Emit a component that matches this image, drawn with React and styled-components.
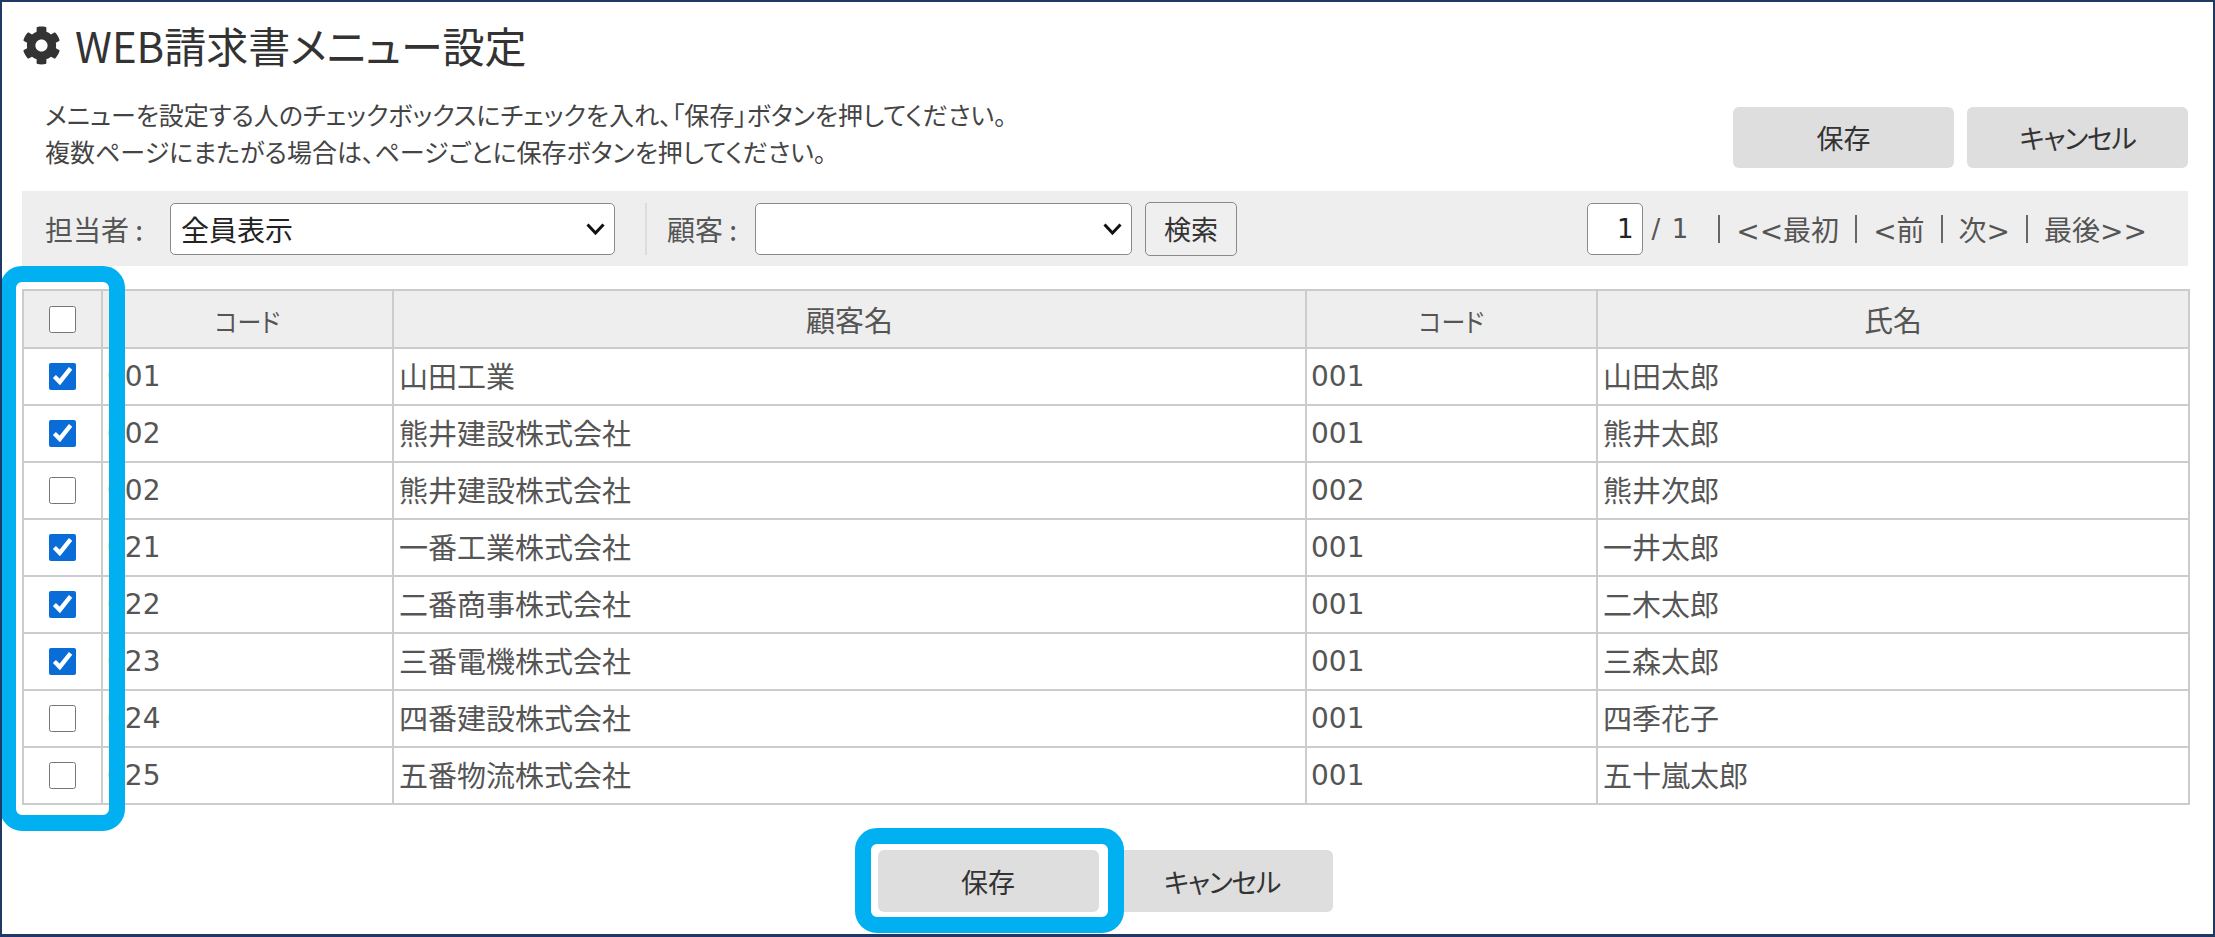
import { createGlobalStyle } from "styled-components";
import styled from "styled-components";
import { FaCog } from "react-icons/fa";

const JP = `"Noto Sans CJK JP", "Noto Sans", sans-serif`;
const NUM = `"DejaVu Sans", "Noto Sans CJK JP", sans-serif`;

const rows = [
  { on: true, id: "001", name: "山田工業", code: "001", person: "山田太郎" },
  { on: true, id: "002", name: "熊井建設株式会社", code: "001", person: "熊井太郎" },
  { on: false, id: "002", name: "熊井建設株式会社", code: "002", person: "熊井次郎" },
  { on: true, id: "021", name: "一番工業株式会社", code: "001", person: "一井太郎" },
  { on: true, id: "022", name: "二番商事株式会社", code: "001", person: "二木太郎" },
  { on: true, id: "023", name: "三番電機株式会社", code: "001", person: "三森太郎" },
  { on: false, id: "024", name: "四番建設株式会社", code: "001", person: "四季花子" },
  { on: false, id: "025", name: "五番物流株式会社", code: "001", person: "五十嵐太郎" },
];

const Chevron = () => (
  <ChevronIcon viewBox="0 0 19 12" width="19" height="12">
    <path d="M1.5 1.5 L9.5 10 L17.5 1.5" fill="none" stroke="#111" strokeWidth="3" />
  </ChevronIcon>
);

const App = () => {
  return (
    <Frame>
      <TitleRow>
        <FaCog size={39} color="#333" />
        <Title>WEB請求書メニュー設定</Title>
      </TitleRow>

      <IntroRow>
        <Intro>
          <p>メニューを設定する人のチェックボックスにチェックを入れ、「保存」ボタンを押してください。</p>
          <p>複数ページにまたがる場合は、ページごとに保存ボタンを押してください。</p>
        </Intro>
        <Actions>
          <ActionButton>保存</ActionButton>
          <ActionButton $tight>キャンセル</ActionButton>
        </Actions>
      </IntroRow>

      <Toolbar>
        <Label $width={125}>担当者 :</Label>
        <SelectWrap $width={445}>
          <Select defaultValue="all">
            <option value="all">全員表示</option>
          </Select>
          <Chevron />
        </SelectWrap>
        <Divider />
        <Label $width={88}>顧客 :</Label>
        <SelectWrap $width={377}>
          <Select defaultValue="">
            <option value=""></option>
          </Select>
          <Chevron />
        </SelectWrap>
        <SearchButton>検索</SearchButton>
        <Pager>
          <PageInput defaultValue="1" />
          <PageTotal>/ 1</PageTotal>
          <PageSep />
          <PageLink>&lt;&lt;最初</PageLink>
          <PageSep />
          <PageLink>&lt;前</PageLink>
          <PageSep />
          <PageLink>次&gt;</PageLink>
          <PageSep />
          <PageLink>最後&gt;&gt;</PageLink>
        </Pager>
      </Toolbar>

      <TableWrap>
        <Table>
          <colgroup>
            <col width="79" />
            <col width="291" />
            <col width="913" />
            <col width="291" />
            <col width="592" />
          </colgroup>
          <thead>
            <tr>
              <Head>
                <Check type="checkbox" />
              </Head>
              <Head>
                <Narrow>コード</Narrow>
              </Head>
              <Head>顧客名</Head>
              <Head>
                <Narrow>コード</Narrow>
              </Head>
              <Head>氏名</Head>
            </tr>
          </thead>
          <tbody>
            {rows.map((row, i) => (
              <tr key={i}>
                <CheckCell>
                  <Check type="checkbox" defaultChecked={row.on} />
                </CheckCell>
                <CodeCell>{row.id}</CodeCell>
                <Cell>{row.name}</Cell>
                <CodeCell>{row.code}</CodeCell>
                <Cell>{row.person}</Cell>
              </tr>
            ))}
          </tbody>
        </Table>
        <ColumnHighlight />
      </TableWrap>

      <Footer>
        <SaveWrap>
          <FooterButton>保存</FooterButton>
          <SaveHighlight />
        </SaveWrap>
        <FooterButton $tight>キャンセル</FooterButton>
      </Footer>
      <GlobalStyle />
    </Frame>
  );
};
export default App;

const GlobalStyle = createGlobalStyle`
  html, body {
    margin: 0;
    padding: 0;
    background: #fff;
  }
  * {
    box-sizing: border-box;
  }
`;

const Frame = styled.div`
  width: 2215px;
  height: 937px;
  overflow: hidden;
  border: 2px solid #1f3864;
  border-bottom-width: 3px;
  padding: 0 25px 0 20px;
  background: #fff;
  color: #444;
  font-family: ${JP};
  font-feature-settings: "palt";
`;

const TitleRow = styled.div`
  display: flex;
  align-items: center;
  gap: 14px;
  height: 64px;
  margin-top: 11px;
`;

const Title = styled.h1`
  margin: 0;
  font-size: 42px;
  font-weight: 400;
  line-height: 64px;
  color: #333;
`;

const IntroRow = styled.div`
  display: flex;
  justify-content: space-between;
  align-items: flex-end;
  height: 91px;
`;

const Intro = styled.div`
  margin-bottom: -2px;
  padding: 0 0 0 23px;
  font-size: 25px;
  line-height: 37px;
  color: #444;

  p {
    margin: 0;
  }
`;

const Actions = styled.div`
  display: flex;
  gap: 13px;
`;

const ActionButton = styled.button`
  width: 221px;
  height: 61px;
  border: 0;
  border-radius: 6px;
  background: #dedede;
  color: #333;
  font-family: ${JP};
  font-feature-settings: "palt";
  font-size: 27px;
  letter-spacing: ${(p) => (p.$tight ? "-1.2px" : "0")};
  padding: 0;
`;

const Toolbar = styled.div`
  display: flex;
  align-items: center;
  height: 75px;
  margin-top: 23px;
  padding: 0 41px 0 23px;
  background: #eeeeee;
`;

const Label = styled.span`
  flex: none;
  width: ${(p) => p.$width}px;
  font-size: 28px;
  color: #555;
  white-space: pre;
`;

const SelectWrap = styled.div`
  position: relative;
  flex: none;
  width: ${(p) => p.$width}px;
  height: 52px;
`;

const Select = styled.select`
  appearance: none;
  display: block;
  width: 100%;
  height: 100%;
  padding: 0 4px 0 10px;
  border: 1px solid #8a8a8a;
  border-radius: 5px;
  background: #fff;
  color: #222;
  font-family: ${JP};
  font-size: 28px;
`;

const ChevronIcon = styled.svg`
  position: absolute;
  top: 20px;
  right: 10px;
  pointer-events: none;
`;

const Divider = styled.span`
  width: 2px;
  height: 52px;
  margin: 0 20px 0 30px;
  background: #dcdcdc;
`;

const SearchButton = styled.button`
  width: 92px;
  height: 54px;
  margin-left: 13px;
  padding: 0;
  border: 1px solid #8a8a8a;
  border-radius: 5px;
  background: #efefef;
  color: #333;
  font-family: ${JP};
  font-size: 27px;
`;

const Pager = styled.div`
  display: flex;
  align-items: center;
  margin-left: auto;
  font-family: ${NUM};
  font-size: 28px;
  color: #555;
`;

const PageInput = styled.input`
  width: 56px;
  height: 52px;
  padding: 0 8px 0 0;
  border: 1px solid #8a8a8a;
  border-radius: 5px;
  background: #fff;
  color: #222;
  text-align: right;
  font-family: ${NUM};
  font-size: 26px;
`;

const PageTotal = styled.span`
  margin: 0 14px 0 9px;
  font-size: 26px;
  word-spacing: 3px;
`;

const PageSep = styled.span`
  width: 2px;
  height: 28px;
  margin: 0 16px;
  background: #666;
`;

const PageLink = styled.span`
  white-space: nowrap;
`;

const TableWrap = styled.div`
  position: relative;
  margin-top: 23px;
`;

const Table = styled.table`
  width: 2166px;
  table-layout: fixed;
  border-collapse: collapse;
  font-size: 29px;
  color: #555;
`;

const Head = styled.th`
  height: 58px;
  padding: 0;
  border: 2px solid #cccccc;
  background: #eeeeee;
  font-weight: 400;
  text-align: center;
  color: #555;
`;

const Narrow = styled.span`
  display: inline-block;
  font-size: 26px;
  transform: scaleX(0.92);
`;

const Cell = styled.td`
  height: 57px;
  padding: 0 5px 3px;
  border: 2px solid #cccccc;
  white-space: nowrap;
`;

const CodeCell = styled(Cell)`
  padding: 0 4px;
  font-family: ${NUM};
  font-size: 28px;
`;

const CheckCell = styled(Cell)`
  padding: 0;
  text-align: center;
`;

const Check = styled.input`
  display: block;
  width: 27px;
  height: 27px;
  margin: 0 auto;
  accent-color: #0a6cd6;
`;

const ColumnHighlight = styled.div`
  position: absolute;
  top: -23px;
  left: -22px;
  width: 125px;
  height: 565px;
  border: 16px solid #00b0f0;
  border-radius: 22px;
  pointer-events: none;
`;

const Footer = styled.div`
  display: flex;
  justify-content: center;
  gap: 13px;
  margin-top: 45px;
`;

const SaveWrap = styled.div`
  position: relative;
`;

const FooterButton = styled(ActionButton)`
  display: block;
  height: 62px;
`;

const SaveHighlight = styled.div`
  position: absolute;
  top: -22px;
  bottom: -21px;
  left: -23px;
  right: -25px;
  border: 16px solid #00b0f0;
  border-radius: 22px;
  pointer-events: none;
`;
